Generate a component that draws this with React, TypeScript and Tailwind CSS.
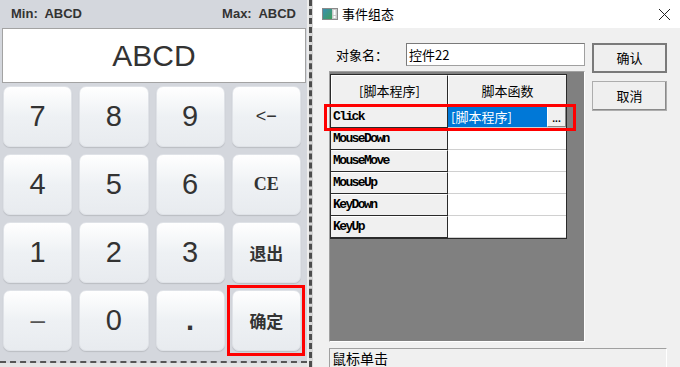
import React from "react";

const cjk = "font-['Noto_Sans_CJK_SC',sans-serif]";
const sans = "font-['Liberation_Sans','Noto_Sans_CJK_SC',sans-serif]";

function Key({ children, className = "", framed = false }: { children: React.ReactNode; className?: string; framed?: boolean }) {
  return (
    <div className="relative">
      <div
        className={`h-[61px] rounded-[7px] border border-[#dfe2e7] bg-gradient-to-b from-white via-[#eef1f4] to-[#e8ebef] shadow-[0_1px_1px_rgba(0,0,0,0.12)] flex items-center justify-center text-[#333] ${className}`}
      >
        {children}
      </div>
      {framed && <div className="absolute -left-[5px] -top-[5px] -right-[4px] -bottom-[5px] border-[3px] border-[#ff0000]" />}
    </div>
  );
}

function Calculator() {
  const digit = `${sans} text-[29px]`;
  return (
    <div className="w-[307px] h-[363px] bg-[#d4d7dd] flex flex-col border-b-2 border-dashed border-[#555]">
      <div className={`h-[28px] px-[11px] flex items-center justify-between text-[13px] font-bold text-[#333] whitespace-pre ${sans}`}>
        <span>Min:  ABCD</span>
        <span>Max:  ABCD</span>
      </div>
      <div className={`ml-[2px] w-[304px] h-[55px] bg-white border border-[#a3a3a3] flex items-center justify-center text-[30px] text-[#333] ${sans}`}>
        ABCD
      </div>
      <div className="mt-[3px] pl-[3px] pr-[6px] grid grid-cols-4 gap-x-[7px] gap-y-[7px]">
        <Key className={digit}>7</Key>
        <Key className={digit}>8</Key>
        <Key className={digit}>9</Key>
        <Key className={`${sans} text-[18px]`}>&lt;−</Key>
        <Key className={digit}>4</Key>
        <Key className={digit}>5</Key>
        <Key className={digit}>6</Key>
        <Key className="font-['Liberation_Serif',serif] font-bold text-[18px]">CE</Key>
        <Key className={digit}>1</Key>
        <Key className={digit}>2</Key>
        <Key className={digit}>3</Key>
        <Key className={`${cjk} font-bold text-[17px]`}>退出</Key>
        <Key className={`${sans} text-[26px] text-[#555]`}>–</Key>
        <Key className={digit}>0</Key>
        <Key className={`${sans} text-[29px] font-bold`}>.</Key>
        <Key className={`${cjk} font-bold text-[17px]`} framed>
          确定
        </Key>
      </div>
    </div>
  );
}

const events = ["MouseDown", "MouseMove", "MouseUp", "KeyDown", "KeyUp"];

function EventTable() {
  const mono = "font-['Liberation_Mono',monospace] font-bold text-[13px] tracking-[-1.6px] text-black";
  return (
    <div className="w-[237px] border border-[#2a2a2a] bg-white">
      <div className={`grid grid-cols-[117px_118px] h-[31px] text-[13px] text-black ${cjk}`}>
        <div className="bg-[#f0f0f0] border-t border-l border-white border-r border-r-[#2a2a2a] border-b border-b-[#2a2a2a] flex items-center justify-center">
          [脚本程序]
        </div>
        <div className="bg-[#f0f0f0] border-t border-l border-white border-b border-b-[#2a2a2a] flex items-center justify-center">
          脚本函数
        </div>
      </div>
      <div className="relative grid grid-cols-[117px_118px] h-[22px]">
        <div className={`bg-[#f0f0f0] border-t border-white border-r border-r-[#2a2a2a] border-b border-b-[#2a2a2a] flex items-center pl-[2px] ${mono}`}>
          Click
        </div>
        <div className="flex border-b border-[#d0d0d0]">
          <div className={`flex-1 bg-[#0078d7] text-white text-[13px] flex items-center pl-[3px] ${cjk}`}>[脚本程序]</div>
          <div className="w-[19px] bg-[#f0f0f0] border-t border-l border-white border-r border-b border-r-[#888] border-b-[#888] flex items-end justify-center pb-[3px] text-[10px] font-bold leading-none">
            ...
          </div>
        </div>
        <div className="absolute -left-[7px] -right-[10px] -top-[2px] -bottom-[3px] border-[3px] border-[#ff0000]" />
      </div>
      {events.map((e) => (
        <div key={e} className="grid grid-cols-[117px_118px] h-[22px]">
          <div className={`bg-[#f0f0f0] border-t border-white border-r border-r-[#2a2a2a] border-b border-b-[#2a2a2a] flex items-center pl-[2px] ${mono}`}>
            {e}
          </div>
          <div className="bg-white border-b border-[#d0d0d0]" />
        </div>
      ))}
    </div>
  );
}

function DialogButton({ children, primary = false }: { children: React.ReactNode; primary?: boolean }) {
  return (
    <div
      className={`h-[30px] bg-[#efefef] flex items-center justify-center text-[13px] text-black ${cjk} ${
        primary ? "border-2 border-[#7a7a7a]" : "border border-[#adadad] shadow-[inset_-1px_-1px_0_#8a8a8a]"
      }`}
    >
      {children}
    </div>
  );
}

function Dialog() {
  return (
    <div className="flex-1 h-full flex flex-col bg-[#f0f0f0]">
      <div className="h-[28px] bg-white flex items-center pl-[9px] pr-[8px]">
        <svg width="16" height="12" viewBox="0 0 16 12" className="mr-[4px]">
          <defs>
            <linearGradient id="ic" x1="0" y1="0" x2="1" y2="1">
              <stop offset="0" stopColor="#3a8fb0" />
              <stop offset="1" stopColor="#3f9d5a" />
            </linearGradient>
          </defs>
          <rect x="0.5" y="0.5" width="15" height="11" fill="#c9c9c9" stroke="#8a8a8a" />
          <rect x="1" y="1" width="9" height="10" fill="url(#ic)" />
          <rect x="11.5" y="2" width="2" height="5" fill="#fff" />
          <rect x="11.5" y="8" width="2" height="2" fill="#fff" />
        </svg>
        <span className={`text-[13px] text-black ${cjk}`}>事件组态</span>
        <svg width="13" height="13" viewBox="0 0 13 13" className="ml-auto mr-[1px]">
          <path d="M1 1 L12 12 M12 1 L1 12" stroke="#222" strokeWidth="1" />
        </svg>
      </div>
      <div className="flex pl-[16px]">
        <div className="w-[256px] flex flex-col">
          <div className="mt-[15px] h-[23px] flex items-center">
            <span className={`w-[77px] pl-[7px] text-[13px] text-black ${cjk}`}>对象名：</span>
            <div className={`flex-1 h-full bg-white border border-[#a0a0a0] border-t-[#7a7a7a] border-l-[#7a7a7a] flex items-center pl-[2px] text-[13px] text-black ${cjk}`}>
              控件22
            </div>
          </div>
          <div className="mt-[5px] h-[271px] bg-[#808080] border-l border-t border-[#a0a0a0] border-r border-b border-r-white border-b-white pt-[2px]">
            <EventTable />
          </div>
        </div>
        <div className="w-[75px] ml-[7px] pt-[15px] flex flex-col gap-[8px]">
          <DialogButton primary>确认</DialogButton>
          <DialogButton>取消</DialogButton>
        </div>
      </div>
      <div className={`mt-[6px] ml-[16px] w-[338px] flex-1 border-t border-l border-[#a0a0a0] border-r border-r-white flex items-start pl-[2px] text-[14px] leading-[18px] text-black ${cjk}`}>
        鼠标单击
      </div>
    </div>
  );
}

export default function App() {
  return (
    <div className="w-[680px] h-[367px] flex overflow-hidden bg-[#e4e4e4]">
      <Calculator />
      <div className="w-[2px] h-full bg-[#ececec]" />
      <div className="w-[4px] h-full bg-[#d6d6d6] border-l-[3px] border-dashed border-[#4d4d4d]" />
      <Dialog />
    </div>
  );
}
